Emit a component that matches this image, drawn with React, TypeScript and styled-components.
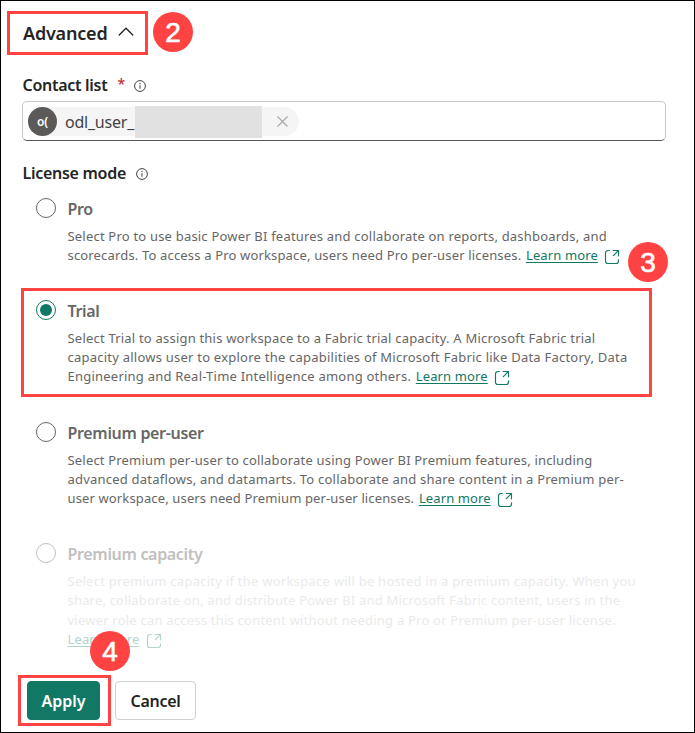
import type { ReactNode } from "react";
import styled, { createGlobalStyle } from "styled-components";

const GREEN = "#117865";
const RED = "#ff4343";

const Global = createGlobalStyle`
  *, *::before, *::after { box-sizing: border-box; }
  body { margin: 0; background: #fff; }
`;

const Frame = styled.main`
  position: relative;
  display: flex;
  flex-direction: column;
  width: 695px;
  height: 733px;
  padding: 0 28px 0 21px;
  overflow: hidden;
  border: 1px solid #000;
  background: #fff;
  color: #242424;
  font-family: "Noto Sans", "Open Sans", sans-serif;
`;

const SectionToggle = styled.div`
  display: flex;
  align-items: center;
  gap: 11px;
  height: 24px;
  margin: 20px 0 0 1px;
  font-size: 18px;
  font-weight: 600;
  letter-spacing: -0.2px;
  line-height: 24px;

  svg { margin-top: -2px; }
`;

const FieldLabel = styled.div<{ $top: number }>`
  display: flex;
  align-items: center;
  height: 22px;
  margin: ${(p) => p.$top}px 0 0 0.5px;
  font-size: 16px;
  font-weight: 600;
  letter-spacing: -0.28px;
  line-height: 22px;

  svg { margin: 2px 0 0 9.5px; }
`;

const Required = styled.span`
  margin: -2px 0 0 10px;
  color: #bc2f32;
  font-size: 14px;
  font-weight: 500;
`;

const PeopleField = styled.div`
  display: flex;
  align-items: center;
  width: 644px;
  height: 40px;
  margin-top: 5px;
  padding-left: 5px;
  border: 1px solid #c9c9c9;
  border-bottom-color: #575757;
  border-radius: 5px;
`;

const Chip = styled.div`
  display: flex;
  align-items: center;
  width: 271px;
  height: 29px;
  margin-top: 1px;
  border-radius: 15px;
  background: #f5f5f5;
  color: #424242;
  font-size: 16px;
  letter-spacing: -0.22px;
`;

const Avatar = styled.span`
  display: grid;
  place-items: center;
  width: 29px;
  height: 29px;
  margin-right: 8px;
  border-radius: 50%;
  background: #5c5a58;
  color: #fff;
  font-size: 12px;
  font-weight: 600;
`;

const ChipName = styled.span`
  width: 70px;
  white-space: nowrap;
`;

const Redaction = styled.span`
  width: 127px;
  height: 32px;
  background: #e1e1e1;
`;

const Dismiss = styled.svg`
  margin-left: 15px;
`;

const Options = styled.div`
  display: flex;
  flex-direction: column;
  margin-top: 14px;
`;

const Option = styled.div<{ $height: number; $faded?: boolean }>`
  display: grid;
  grid-template-columns: 20px 1fr;
  column-gap: 10px;
  align-content: start;
  height: ${(p) => p.$height}px;
  padding-left: 14px;
  color: ${(p) => (p.$faded ? "#c0c0c0" : "#666")};
`;

const Radio = styled.span<{ $checked?: boolean }>`
  display: grid;
  place-items: center;
  width: 20px;
  height: 20px;
  border: 1px solid ${(p) => (p.$checked ? GREEN : "currentColor")};
  border-radius: 50%;

  &::after {
    content: "";
    width: 12px;
    height: 12px;
    border-radius: 50%;
    background: ${(p) => (p.$checked ? GREEN : "transparent")};
  }
`;

const OptionTitle = styled.div`
  height: 22px;
  padding-left: 1.5px;
  font-size: 16px;
  font-weight: 600;
  letter-spacing: -0.32px;
  line-height: 22px;
`;

const Description = styled.div<{ $faded?: boolean }>`
  grid-column: 2;
  margin-top: 7px;
  padding-left: 1.5px;
  color: ${(p) => (p.$faded ? "#eaeaea" : "#666")};
  font-size: 13px;
  line-height: ${(p) => (p.$faded ? 19.4 : 19)}px;
`;

const Line = styled.div<{ $track: number }>`
  display: flex;
  letter-spacing: ${(p) => p.$track}px;
  white-space: nowrap;
`;

const LearnMore = styled.a<{ $faded?: boolean; $gap: number }>`
  display: flex;
  margin-left: ${(p) => p.$gap}px;
  color: ${(p) => (p.$faded ? "#b3d3cc" : GREEN)};
  letter-spacing: 0.12px;
  text-decoration: underline;
  text-underline-offset: 2px;

  svg { margin: 3px 0 0 6.5px; }
`;

const Actions = styled.div`
  display: flex;
  gap: 15px;
  margin-top: auto;
  padding: 0 0 12px 5px;
`;

const Button = styled.button<{ $primary?: boolean }>`
  width: ${(p) => (p.$primary ? 73 : 81)}px;
  height: 39px;
  padding: 1px 0 0;
  border: 1px solid ${(p) => (p.$primary ? GREEN : "#d1d1d1")};
  border-radius: 4px;
  background: ${(p) => (p.$primary ? GREEN : "#fff")};
  color: ${(p) => (p.$primary ? "#fff" : "#242424")};
  font: 600 16px "Noto Sans", "Open Sans", sans-serif;
  letter-spacing: ${(p) => (p.$primary ? 0 : -0.32)}px;
`;

/* Callouts lie over the panel content. */
const Outline = styled.div<{ $x: number; $y: number; $w: number; $h: number }>`
  position: absolute;
  left: ${(p) => p.$x - 1}px;
  top: ${(p) => p.$y - 1}px;
  width: ${(p) => p.$w}px;
  height: ${(p) => p.$h}px;
  border: 3px solid ${RED};
`;

const Step = styled.div<{ $x: number; $y: number }>`
  position: absolute;
  left: ${(p) => p.$x - 1}px;
  top: ${(p) => p.$y - 1}px;
  width: 40px;
  height: 40px;
  border-radius: 50%;
  background: ${RED};
  color: #fff;
  font: 28px/41px "Liberation Sans", Arial, sans-serif;
  text-align: center;
  -webkit-text-stroke: 0.6px #fff;
`;

const InfoIcon = () => (
  <svg width="12" height="12" viewBox="0 0 12 12" fill="none" stroke="#424242">
    <circle cx="6" cy="6" r="5.4" strokeWidth="1" />
    <path d="M6 5.2V8.8" strokeWidth="1" />
    <circle cx="6" cy="3.5" r=".65" fill="#424242" stroke="none" />
  </svg>
);

const OpenIcon = () => (
  <svg width="16" height="16" viewBox="0 0 16 16" fill="none" stroke="currentColor" strokeWidth="1.15" strokeLinecap="round" strokeLinejoin="round">
    <path d="M5.3 1.5H4A2.5 2.5 0 0 0 1.5 4V12A2.5 2.5 0 0 0 4 14.5H12A2.5 2.5 0 0 0 14.5 12V10.7" />
    <path d="M9.2 1.5H14.5V6.8M14.3 1.7L9.3 6.7" />
  </svg>
);

interface LicenseOptionProps {
  title: string;
  height: number;
  lines: [string, number][];
  linkGap?: number;
  checked?: boolean;
  faded?: boolean;
}

function LicenseOption({ title, height, lines, linkGap = 4.7, checked, faded }: LicenseOptionProps) {
  const link: ReactNode = (
    <LearnMore $faded={faded} $gap={linkGap}>
      Learn more
      <OpenIcon />
    </LearnMore>
  );
  return (
    <Option $height={height} $faded={faded}>
      <Radio $checked={checked} />
      <OptionTitle>{title}</OptionTitle>
      <Description $faded={faded}>
        {lines.map(([text, track], i) => (
          <Line key={i} $track={track}>
            {text}
            {i === lines.length - 1 && link}
          </Line>
        ))}
      </Description>
    </Option>
  );
}

export default function App() {
  return (
    <>
      <Global />
      <Frame>
        <SectionToggle>
          Advanced
          <svg width="16" height="10" viewBox="0 0 16 10" fill="none" stroke="#242424" strokeWidth="1.3" strokeLinecap="round">
            <path d="M1.2 8L8 1.2L14.8 8" />
          </svg>
        </SectionToggle>

        <FieldLabel $top={29}>
          Contact list <Required>*</Required>
          <InfoIcon />
        </FieldLabel>
        <PeopleField>
          <Chip>
            <Avatar>o(</Avatar>
            <ChipName>odl_user_</ChipName>
            <Redaction />
            <Dismiss width="11" height="11" viewBox="0 0 11 11" stroke="#a6a6a6" strokeWidth="1.1">
              <path d="M.5 .5L10.5 10.5M10.5 .5L.5 10.5" />
            </Dismiss>
          </Chip>
        </PeopleField>

        <FieldLabel $top={21}>
          License mode <InfoIcon />
        </FieldLabel>
        <Options>
          <LicenseOption
            title="Pro"
            height={102}
            lines={[
              ["Select Pro to use basic Power BI features and collaborate on reports, dashboards, and", 0.2],
              ["scorecards. To access a Pro workspace, users need Pro per-user licenses.", 0.165],
            ]}
          />
          <LicenseOption
            title="Trial"
            height={122}
            checked
            lines={[
              ["Select Trial to assign this workspace to a Fabric trial capacity. A Microsoft Fabric trial", 0.205],
              ["capacity allows user to explore the capabilities of Microsoft Fabric like Data Factory, Data", 0.231],
              ["Engineering and Real-Time Intelligence among others.", 0.225],
            ]}
          />
          <LicenseOption
            title="Premium per-user"
            height={121}
            lines={[
              ["Select Premium per-user to collaborate using Power BI Premium features, including", 0.185],
              ["advanced dataflows, and datamarts. To collaborate and share content in a Premium per-", 0.216],
              ["user workspace, users need Premium per-user licenses.", 0.135],
            ]}
          />
          <LicenseOption
            title="Premium capacity"
            height={110}
            faded
            linkGap={0}
            lines={[
              ["Select premium capacity if the workspace will be hosted in a premium capacity. When you", 0.258],
              ["share, collaborate on, and distribute Power BI and Microsoft Fabric content, users in the", 0.19],
              ["viewer role can access this content without needing a Pro or Premium per-user license.", 0.22],
              ["", 0],
            ]}
          />
        </Options>

        <Actions>
          <Button $primary>Apply</Button>
          <Button>Cancel</Button>
        </Actions>

        <Outline $x={7} $y={11} $w={141} $h={44} />
        <Outline $x={21} $y={288} $w={631} $h={109} />
        <Outline $x={18} $y={675} $w={93} $h={51} />
        <Step $x={153} $y={12}>2</Step>
        <Step $x={628} $y={242}>3</Step>
        <Step $x={90} $y={631}>4</Step>
      </Frame>
    </>
  );
}
